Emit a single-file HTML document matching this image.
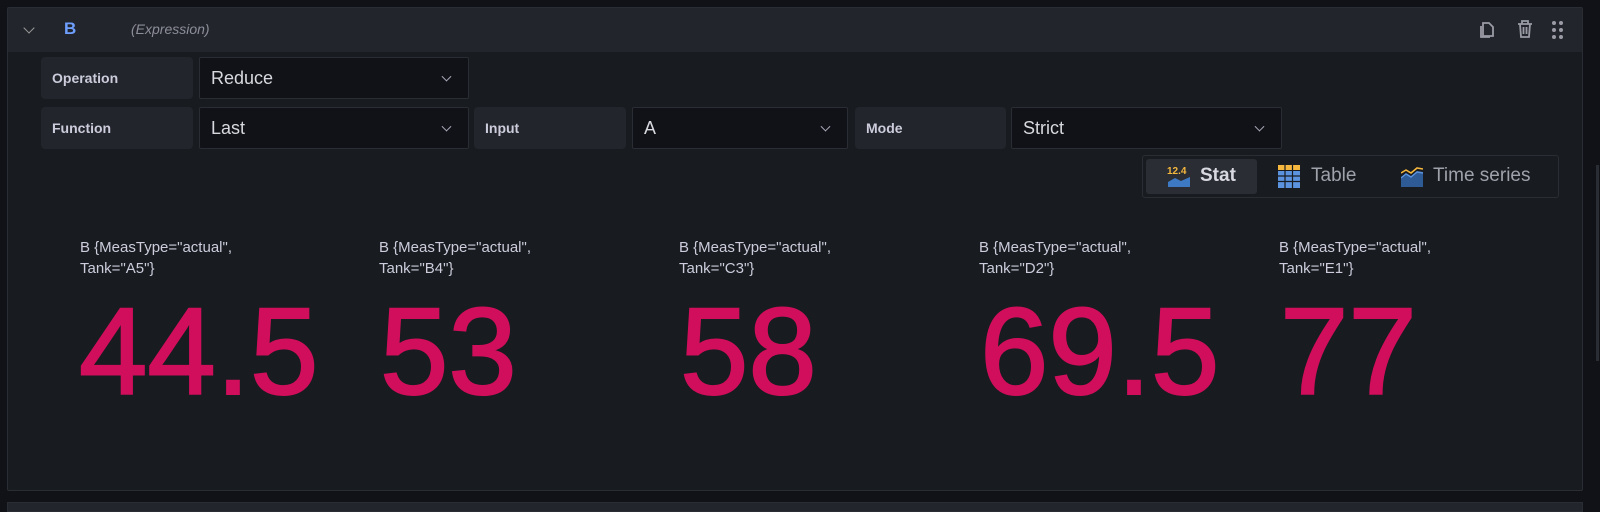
<!DOCTYPE html>
<html><head><meta charset="utf-8"><style>
*{box-sizing:border-box;margin:0;padding:0}
body{width:1600px;height:505px;background:#111217;font-family:"Liberation Sans",sans-serif;position:relative;overflow:hidden;color:#ccccdc}
.abs{position:absolute}
.panel{left:7px;top:7px;width:1576px;height:484px;background:#181b1f;border:1px solid #2a2d33;border-radius:2px}
.hdr{left:8px;top:8px;width:1574px;height:44px;background:#22252b}
.lbl{background:#22252b;border-radius:4px;font-size:14px;font-weight:bold;color:#ccccdc;padding-left:11px;display:flex;align-items:center}
.sel{background:#111217;border:1px solid #2a2d33;border-radius:2px;font-size:18px;color:#d8d9e0;padding-left:11px;display:flex;align-items:center}
.chev{position:absolute;right:18px;top:50%;width:7px;height:7px;border-right:1.5px solid #aab;border-bottom:1.5px solid #aab;transform:translateY(-70%) rotate(45deg)}
.title{font-size:15px;line-height:21px;color:#ccccdc}
.num{font-size:123px;color:#d10e5c;line-height:1;-webkit-text-stroke:2px #d10e5c}
</style></head><body>
<div class="abs panel"></div>
<div class="abs hdr"></div>
<div class="abs" style="left:25px;top:24px;width:8px;height:8px;border-right:1.5px solid #999;border-bottom:1.5px solid #999;transform:rotate(45deg)"></div>
<div class="abs" style="left:64px;top:19px;font-size:17px;font-weight:bold;color:#6e9fff">B</div>
<div class="abs" style="left:131px;top:21px;font-size:14px;font-style:italic;color:#8e8e9a">(Expression)</div>
<svg class="abs" style="left:1478px;top:19px" width="18" height="20" viewBox="0 0 18 20" fill="none" stroke="#9a9ba5" stroke-width="1.8"><path d="M5 4h6l4 4v9H5z"/><path d="M3 7v11h9" /></svg>
<svg class="abs" style="left:1516px;top:19px" width="18" height="20" viewBox="0 0 18 20" fill="none" stroke="#9a9ba5" stroke-width="1.8"><path d="M2 5h14M6 5V2h6v3M4 5l1 13h8l1-13M7.5 8v7M10.5 8v7"/></svg>
<svg class="abs" style="left:1551px;top:20px" width="14" height="20" viewBox="0 0 14 20" fill="#9a9ba5"><circle cx="3" cy="3" r="2"/><circle cx="10" cy="3" r="2"/><circle cx="3" cy="10" r="2"/><circle cx="10" cy="10" r="2"/><circle cx="3" cy="17" r="2"/><circle cx="10" cy="17" r="2"/></svg>

<div class="abs lbl" style="left:41px;top:57px;width:152px;height:42px">Operation</div>
<div class="abs sel" style="left:199px;top:57px;width:270px;height:42px">Reduce<span class="chev"></span></div>
<div class="abs lbl" style="left:41px;top:107px;width:152px;height:42px">Function</div>
<div class="abs sel" style="left:199px;top:107px;width:270px;height:42px">Last<span class="chev"></span></div>
<div class="abs lbl" style="left:474px;top:107px;width:152px;height:42px">Input</div>
<div class="abs sel" style="left:632px;top:107px;width:216px;height:42px">A<span class="chev"></span></div>
<div class="abs lbl" style="left:855px;top:107px;width:151px;height:42px">Mode</div>
<div class="abs sel" style="left:1011px;top:107px;width:271px;height:42px">Strict<span class="chev"></span></div>

<div class="abs" style="left:1142px;top:155px;width:417px;height:43px;border:1px solid #2a2d33;border-radius:3px;background:#181b1f"></div>
<div class="abs" style="left:1146px;top:159px;width:111px;height:35px;background:#2a2d33;border-radius:3px"></div>
<svg class="abs" style="left:1167px;top:164px" width="24" height="24" viewBox="0 0 24 24"><text x="0" y="10" font-size="10" font-weight="bold" fill="#f5b73d" font-family="Liberation Sans">12.4</text><path d="M1 18l7-4 6 3 9-4v10H1z" fill="#3e79c4"/></svg>
<div class="abs" style="left:1200px;top:165px;font-size:19px;font-weight:bold;color:#d8d9e0">Stat</div>
<svg class="abs" style="left:1278px;top:165px" width="22" height="23" viewBox="0 0 22 23"><rect x="0" y="0" width="22" height="5" fill="#f5b73d"/><rect x="0" y="6" width="22" height="17" fill="#5b93de"/><path d="M0 11h22M0 16.5h22M7 0v23M14.5 0v23" stroke="#181b1f" stroke-width="1.2"/></svg>
<div class="abs" style="left:1311px;top:165px;font-size:19px;color:#9fa1ab">Table</div>
<svg class="abs" style="left:1401px;top:165px" width="22" height="22" viewBox="0 0 22 22"><path d="M0 12l5-4 5 3 6-5 6 1v15H0z" fill="#2e5a96"/><path d="M0 8l5-3 5 3 6-5 6 1" stroke="#f5b73d" stroke-width="1.6" fill="none"/><path d="M0 13l5-4 5 3 6-5 6 1" stroke="#5b93de" stroke-width="1.4" fill="none"/></svg>
<div class="abs" style="left:1433px;top:165px;font-size:19px;color:#9fa1ab">Time series</div>

<div class="abs title" style="left:80px;top:237px">B {MeasType="actual",<br>Tank="A5"}</div>
<div class="abs title" style="left:379px;top:237px">B {MeasType="actual",<br>Tank="B4"}</div>
<div class="abs title" style="left:679px;top:237px">B {MeasType="actual",<br>Tank="C3"}</div>
<div class="abs title" style="left:979px;top:237px">B {MeasType="actual",<br>Tank="D2"}</div>
<div class="abs title" style="left:1279px;top:237px">B {MeasType="actual",<br>Tank="E1"}</div>

<div class="abs num" style="left:79px;top:291px">44.5</div>
<div class="abs num" style="left:380px;top:291px">53</div>
<div class="abs num" style="left:680px;top:291px">58</div>
<div class="abs num" style="left:980px;top:291px">69.5</div>
<div class="abs num" style="left:1280px;top:291px">77</div>

<div class="abs" style="left:7px;top:502px;width:1576px;height:10px;background:#22252b;border:1px solid #2a2d33"></div>
<div class="abs" style="left:1596px;top:165px;width:3px;height:196px;background:#2a2d33"></div>
</body></html>
